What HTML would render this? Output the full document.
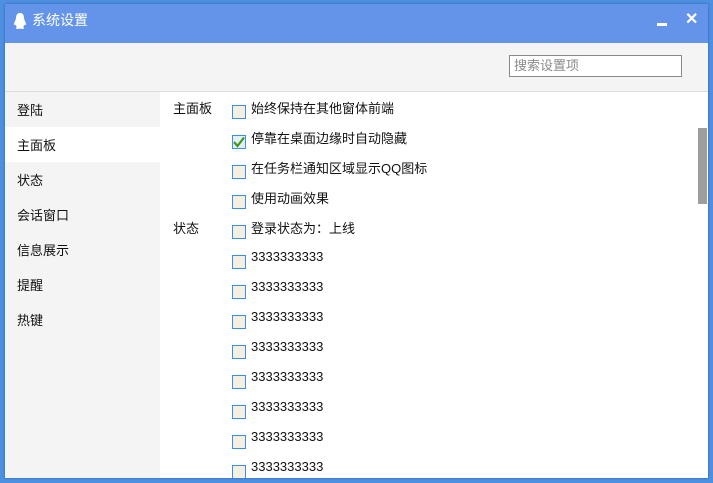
<!DOCTYPE html>
<html><head><meta charset="utf-8"><style>
body{margin:0;width:713px;height:483px;overflow:hidden;background:#4d8fe0;font-family:"Liberation Sans","Noto Sans CJK SC",sans-serif;position:relative}
#win{position:absolute;left:5px;top:4px;width:703px;height:474px;background:#fff;overflow:hidden;box-shadow:0 0 2px #2a5fa8}
#title{position:absolute;left:0;top:0;width:703px;height:39px;background:#6494e9;color:#fff;font-size:14px}
#hdr{position:absolute;left:0;top:39px;width:703px;height:48px;background:#f4f4f4;border-bottom:1px solid #dcdcdc}
#search{position:absolute;left:504px;top:51px;width:167px;height:20px;border:1px solid #8a8a8a;background:#fff;font-size:13px;color:#8a8a8a;line-height:20px;padding-left:4px;box-sizing:content-box}
#side{position:absolute;left:0;top:88px;width:155px;height:390px;background:#f4f4f4}
.si{position:absolute;left:12px;font-size:13px;color:#111}
.lab{position:absolute;left:168px;font-size:13px;color:#111}
.cb{position:absolute;left:227px;width:12px;height:12px;border:1px solid #3b8ff0;background:#f4efe0}
.t{position:absolute;left:246px;font-size:13px;color:#111}
</style></head><body>
<div id="win">
<div id="title">
<svg style="position:absolute;left:8px;top:8px" width="14" height="18" viewBox="0 0 14 18"><path d="M7 1C4 1 3 3.5 3 6C3 8 1 10 1 12.5C1 13.5 2 13 2.5 12.5C3 14 3.5 14.5 4 15C2.5 15.5 2.5 17 5 17C6 17 6.5 16.5 7 16.5C7.5 16.5 8 17 9 17C11.5 17 11.5 15.5 10 15C10.5 14.5 11 14 11.5 12.5C12 13 13 13.5 13 12.5C13 10 11 8 11 6C11 3.5 10 1 7 1Z" fill="#fff"/></svg>
<span style="position:absolute;left:27px;top:6px">系统设置</span>
<div style="position:absolute;left:652px;top:19px;width:10px;height:3px;background:#fff"></div>
<span style="position:absolute;left:680px;top:5px;font-size:16px;font-weight:bold">✕</span>
</div>
<div id="hdr"></div>
<div id="search">搜索设置项</div>
<div id="side">
<div style="position:absolute;left:0;top:35px;width:155px;height:35px;background:#fff"></div>
<span class="si" style="top:8px">登陆</span>
<span class="si" style="top:43px">主面板</span>
<span class="si" style="top:78px">状态</span>
<span class="si" style="top:113px">会话窗口</span>
<span class="si" style="top:148px">信息展示</span>
<span class="si" style="top:183px">提醒</span>
<span class="si" style="top:218px">热键</span>
</div>
<span class="lab" style="top:94px">主面板</span>
<span class="lab" style="top:214px">状态</span>
<div class="cb" style="top:101px"></div><span class="t" style="top:94px">始终保持在其他窗体前端</span>
<div class="cb" style="top:131px;background:#e6eef8"><svg width="12" height="12" viewBox="0 0 12 12" style="position:absolute;left:0;top:0"><path d="M1 6L4.5 10L11 1.5" stroke="#3f9a17" stroke-width="2.2" fill="none"/></svg></div><span class="t" style="top:124px">停靠在桌面边缘时自动隐藏</span>
<div class="cb" style="top:161px"></div><span class="t" style="top:154px">在任务栏通知区域显示QQ图标</span>
<div class="cb" style="top:191px"></div><span class="t" style="top:184px">使用动画效果</span>
<div class="cb" style="top:221px"></div><span class="t" style="top:214px">登录状态为：上线</span>
<div class="cb" style="top:251px"></div><span class="t" style="top:245px">3333333333</span>
<div class="cb" style="top:281px"></div><span class="t" style="top:275px">3333333333</span>
<div class="cb" style="top:311px"></div><span class="t" style="top:305px">3333333333</span>
<div class="cb" style="top:341px"></div><span class="t" style="top:335px">3333333333</span>
<div class="cb" style="top:371px"></div><span class="t" style="top:365px">3333333333</span>
<div class="cb" style="top:401px"></div><span class="t" style="top:395px">3333333333</span>
<div class="cb" style="top:431px"></div><span class="t" style="top:425px">3333333333</span>
<div class="cb" style="top:461px"></div><span class="t" style="top:455px">3333333333</span>
<div style="position:absolute;left:693px;top:124px;width:9px;height:76px;background:#9e9e9e"></div>
</div>
</body></html>
